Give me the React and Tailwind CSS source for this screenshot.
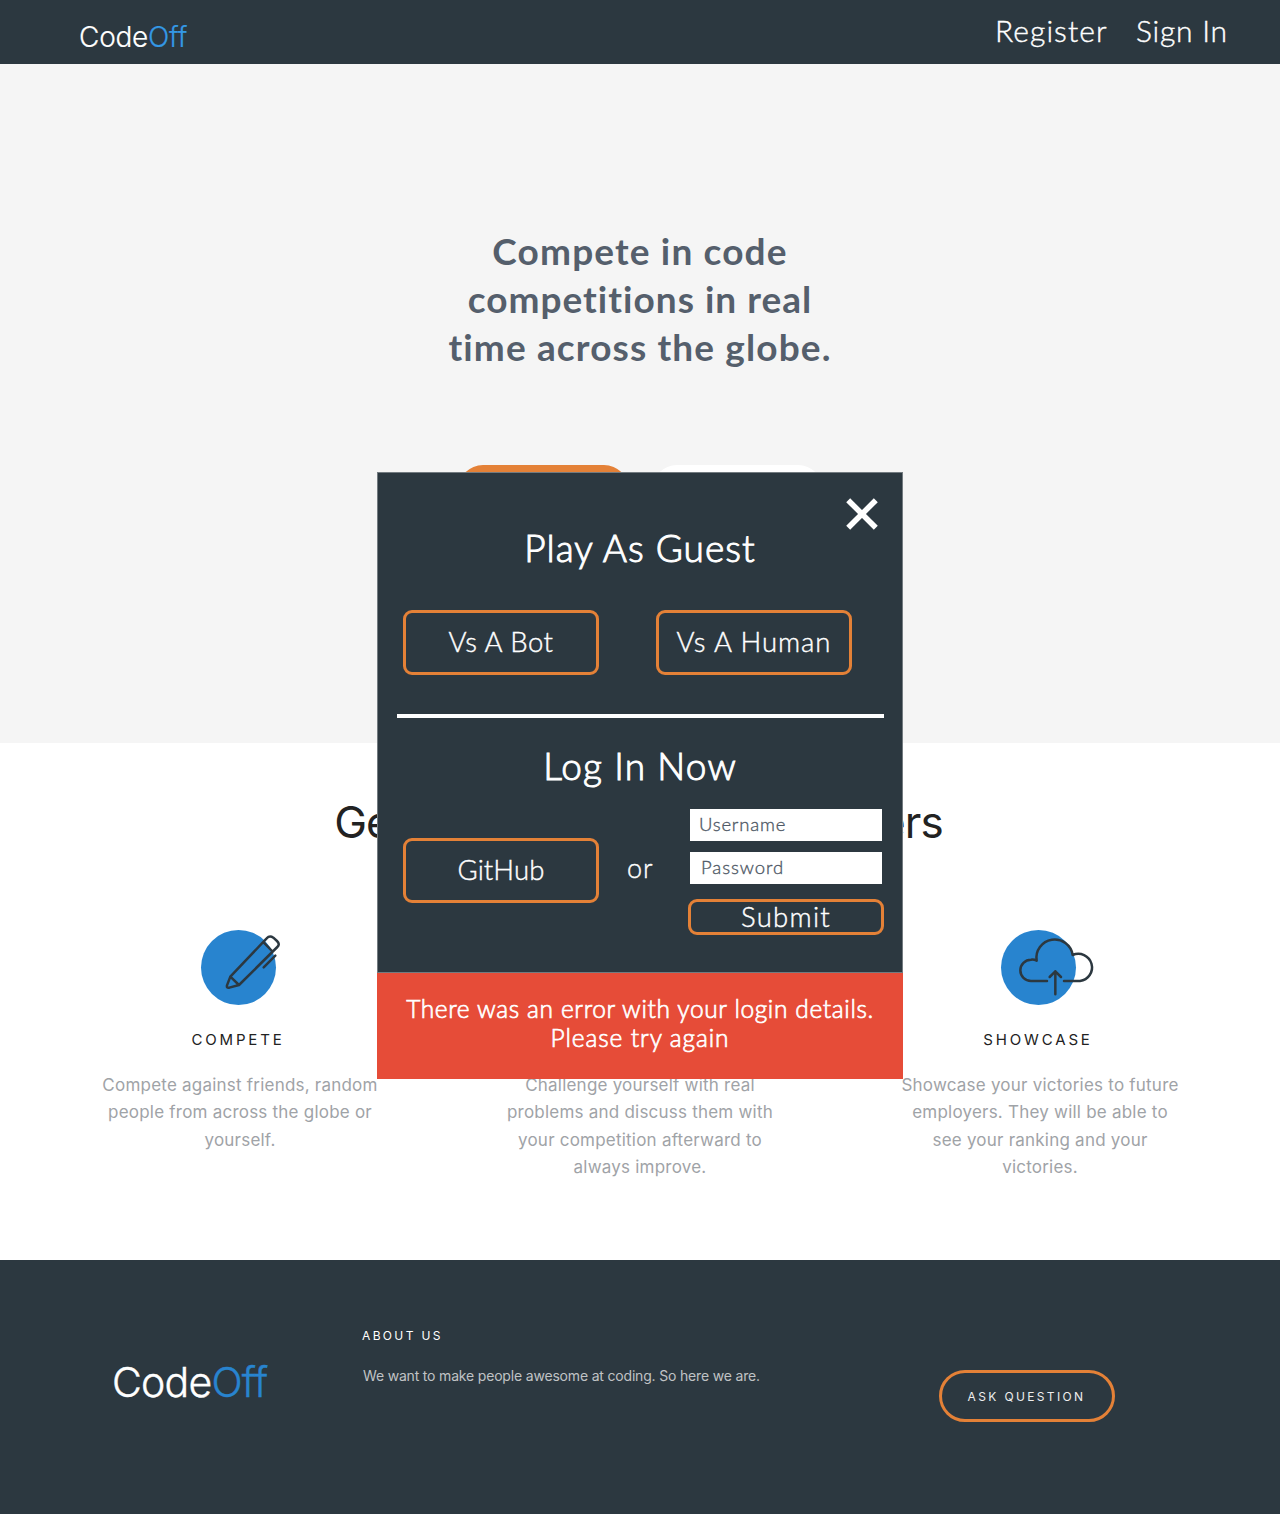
const lato = "font-['Lato',sans-serif]";

function Circle({ children, box }) {
  return (
    <div className="ml-[161px] h-[75px] w-[75px] rounded-full bg-[#2884cf]">
      <svg
        width="112"
        height="80"
        viewBox={box}
        className="max-w-none overflow-visible"
        fill="none"
        stroke="#2c3840"
        strokeWidth="7.5"
        strokeLinecap="round"
        strokeLinejoin="round"
      >
        {children}
      </svg>
    </div>
  );
}

function Feature({ box, icon, title, lines }) {
  return (
    <section className="w-[400px]">
      <Circle box={box}>{icon}</Circle>
      <h3 className="mt-[24px] h-[22px] pr-[4px] text-center text-[15px] leading-[22px] tracking-[2.85px] text-[#222]">{title}</h3>
      <p className="mt-[21px] text-center text-[17px] leading-[27.4px] tracking-[0.22px] text-[#9fa3a7]">
        {lines.map((line) => (
          <span key={line} className="block whitespace-nowrap">{line}</span>
        ))}
      </p>
    </section>
  );
}

const outline =
  "flex items-center justify-center rounded-[9px] border-[3px] border-[#e48137] text-[27.5px] font-light leading-[32px] text-white whitespace-nowrap [-webkit-text-stroke:0.4px_white]";

function Modal() {
  return (
    <div className={`absolute left-[377px] top-[472px] w-[526px] text-white ${lato}`}>
      <div className="h-[501px] border border-[#737b80] bg-[#2c3840]">
        <button aria-label="Close" className="absolute left-[469px] top-[26px] h-[32px] w-[32px]">
          <svg width="32" height="32" viewBox="0 0 32 32" stroke="white" strokeWidth="5.6">
            <path d="M2.2 2.2 29.8 29.8M29.8 2.2 2.2 29.8" />
          </svg>
        </button>
        <h2 className="mt-[50px] h-[48px] text-center text-[37px] font-light leading-[49px] tracking-[1px] [-webkit-text-stroke:1px_white]">Play As Guest</h2>
        <div className="ml-[25px] mt-[39px] flex gap-[57px]">
          <button className={`${outline} h-[65px] w-[196px] pb-px tracking-[0.55px]`}>Vs A Bot</button>
          <button className={`${outline} h-[65px] w-[196px] pb-px tracking-[0.95px]`}>Vs A Human</button>
        </div>
        <div className="ml-[19px] mt-[39px] h-[4px] w-[487px] bg-white" />
        <h2 className="mt-[23px] h-[48px] text-center text-[37px] font-light leading-[49px] tracking-[1.15px] [-webkit-text-stroke:1px_white]">Log In Now</h2>
        <div className="ml-[25px] mt-[20px] flex">
          <button className={`${outline} mt-[29px] h-[65px] w-[196px] pb-[2px] tracking-[0.1px]`}>GitHub</button>
          <span className="ml-[28px] mt-[43px] w-[63px] text-[27px] font-light leading-[32px] tracking-[0.9px] [-webkit-text-stroke:0.4px_white]">or</span>
          <div className="w-[196px] text-[18.5px] font-light text-[#4f5966]">
            <div className="h-[32px] w-[192px] bg-white pl-[9px] leading-[31px] tracking-[0.8px] [-webkit-text-stroke:0.35px_#4f5966]">Username</div>
            <div className="mt-[11px] h-[32px] w-[192px] bg-white pl-[11px] leading-[31px] tracking-[0.95px] [-webkit-text-stroke:0.35px_#4f5966]">Password</div>
            <button className={`${outline} -ml-[2px] mt-[15px] h-[36px] w-[196px] tracking-[1.25px]`}>Submit</button>
          </div>
        </div>
      </div>
      <div className="h-[106px] bg-[#e64c38] pt-[21px] text-center text-[24.5px] font-light leading-[29px] [-webkit-text-stroke:0.7px_white]">
        <span className="block whitespace-nowrap tracking-[0.63px]">There was an error with your login details.</span>
        <span className="block whitespace-nowrap tracking-[0.9px]">Please try again</span>
      </div>
    </div>
  );
}

export default function App() {
  return (
    <div className="relative h-[1514px] w-[1280px] overflow-hidden bg-white font-['Inter',sans-serif]">
      <header className="flex h-[64px] bg-[#2c3840] text-white">
        <div className="w-[995px] pl-[79px] pt-[5px] text-[28px] font-light leading-[64px] tracking-[-0.25px] [-webkit-text-stroke:0.2px]">
          Code<span className="text-[#3498e5] [font-feature-settings:'calt'_0]">Off</span>
        </div>
        <nav className={`flex whitespace-nowrap text-[30px] font-light leading-[60px] [-webkit-text-stroke:0.4px_white] ${lato}`}>
          <a className="w-[141px] tracking-[1.05px]">Register</a>
          <a className="tracking-[0.75px]">Sign In</a>
        </nav>
      </header>

      <main>
        <section className="h-[679px] bg-[#f5f5f5] pt-[163px]">
          <h1 className={`text-center text-[37px] font-bold leading-[48px] text-[#555f6c] ${lato}`}>
            <span className="block tracking-[1.15px]">Compete in code</span>
            <span className="block tracking-[1.02px]">competitions in real</span>
            <span className="block tracking-[1.12px]">time across the globe.</span>
          </h1>
          <div className="ml-[458px] mt-[94px] flex gap-[23px]">
            <div className="h-[50px] w-[171px] rounded-full bg-[#e48137]" />
            <div className="h-[50px] w-[171px] rounded-full bg-white" />
          </div>
        </section>

        <section className="h-[517px] bg-white pt-[49px]">
          <h2 className="pr-[3px] text-center text-[44px] leading-[60px] tracking-[-0.9px] text-[#222]">Get Noticed By Top Employers</h2>
          <div className="ml-[40px] mt-[78px] flex">
            <Feature
              box="64 44 336 240"
              title="COMPETE"
              icon={
                <>
                  <path d="M152 184 261 69Q270 59 281 67L292 77Q302 87 293 95L178 209 149 217Q140 219 142 210ZM152 184 178 209M252 81 277 107" />
                  <path d="M287 121 252 156" />
                </>
              }
              lines={["Compete against friends, random", "people from across the globe or", "yourself."]}
            />
            <Feature
              box="64 44 336 240"
              title=""
              icon={null}
              lines={["Challenge yourself with real", "problems and discuss them with", "your competition afterward to", "always improve."]}
            />
            <Feature
              box="93 44 336 240"
              title="SHOWCASE"
              icon={
                <>
                  <path d="M231 197H183A32 32 0 0 1 183 133Q192 132 200 136A54 54 0 0 1 308 119A41 41 0 1 1 330 197H282" />
                  <path d="M256 237V168M239 185 256 168 273 185" />
                </>
              }
              lines={["Showcase your victories to future", "employers. They will be able to", "see your ranking and your", "victories."]}
            />
          </div>
        </section>
      </main>

      <footer className="flex h-[254px] bg-[#2c3840] text-white">
        <div className="w-[362px] pl-[112px] pt-[92px] text-[41px] font-light leading-[60px] tracking-[-0.77px] [-webkit-text-stroke:0.4px]">
          Code<span className="text-[#2884cf] [font-feature-settings:'calt'_0]">Off</span>
        </div>
        <div className="w-[577px] pt-[66px]">
          <h4 className="text-[12px] leading-[20px] tracking-[2.35px]">ABOUT US</h4>
          <p className="mt-[20px] pl-px text-[14px] leading-[20px] tracking-[-0.18px] text-[#c0c3c5]">
            We want to make people awesome at coding. So here we are.
          </p>
        </div>
        <button className="mt-[110px] flex h-[52px] w-[176px] items-center justify-center rounded-full border-[3px] border-[#e48137] pr-px pt-[2px] text-[12px] tracking-[2.35px] text-[#eee]">
          ASK QUESTION
        </button>
      </footer>

      <Modal />
    </div>
  );
}
